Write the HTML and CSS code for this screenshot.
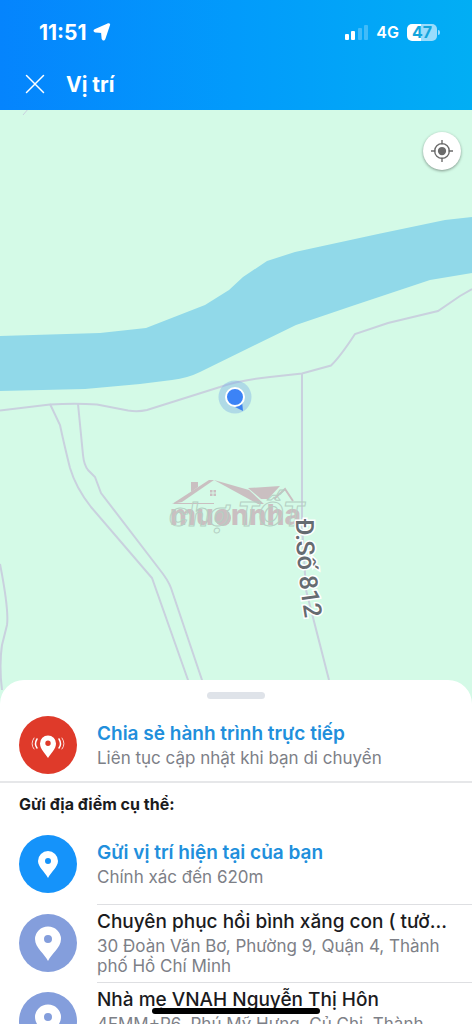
FILE: index.html
```html
<!DOCTYPE html>
<html lang="vi">
<head>
    <meta charset="UTF-8">
    <meta name="viewport" content="width=device-width, initial-scale=1.0">
    <title>Vị trí</title>
    <link rel="stylesheet" href="styles.css">
</head>
<body>
    <div class="app">
        <header class="header">
            <div class="status">
                <span class="time">11:51</span>
                <svg class="arrow" viewBox="0 0 18 18"><path d="M16 2 L11.500 15.500 Q10.600 17.500 9.600 15.500 L9 9 L2.500 8.500 Q0.500 7.800 2.500 6.800 L15 1.300 Q16.500 .8 16 2Z" fill="#fff" stroke="#fff" stroke-width="2" stroke-linejoin="round"/></svg>
                <svg class="signal" viewBox="0 0 24 16">
                    <rect x="0" y="10" width="4" height="6" rx="1" fill="#fff"/>
                    <rect x="6" y="7" width="4" height="9" rx="1" fill="#fff"/>
                    <rect x="13" y="4" width="4" height="12" rx="1" fill="#fff" opacity=".25"/>
                    <rect x="19" y="1" width="4" height="15" rx="1" fill="#fff" opacity=".25"/>
                </svg>
                <span class="network">4G</span>
                <span class="battery">47</span>
                <span class="battery-tip"></span>
            </div>
            <div class="title-bar">
                <button class="close" type="button" aria-label="Đóng">
                    <svg viewBox="0 0 20 20"><path d="M1.500 1.500 L18.500 18.500 M18.500 1.500 L1.500 18.500" stroke="#fff" stroke-width="1.500" stroke-linecap="round"/></svg>
                </button>
                <h1>Vị trí</h1>
            </div>
        </header>

        <main class="map">
            <svg class="map-canvas" viewBox="0 110 472 594" preserveAspectRatio="xMidYMin slice">
                <path class="river" d="M0 336 L100 333 L146 328 L205 305 L229 290 L243 277 L267 261 L295 252 L378 234 L445 220 L472 217 V273 L430 280 L352 306 L296 325 L200 372 Q188 378 172 380 L140 384 L85 389 L0 391Z"/>
                <g class="roads">
                    <path d="M0 410.500 L50 404.500 Q75 403 97 404.500 L128 410.500 Q138 412 147 410 L220 387 Q240 380 270 377 L302 373.500 L331 365.500 Q340 357 355 334 L388 323 L438 311 L460 296 L472 289"/>
                    <path d="M50 404 L60 425 Q64 444 70 468 Q76 488 91 507 L152 578 L188 680 L196 704"/>
                    <path d="M78 404 L83 455 Q84 465 88 470 L95 477 L101 493 L160 570 Q168 580 171 588 L202 680 L210 704"/>
                    <path d="M302 374 L302 525 L306 590 L329 680"/>
                    <path d="M0 564 Q9 610 7 625 L2 645 Q-1 665 2 690"/>
                    <path class="faint" d="M23 115 L29 108"/>
                </g>
                <g class="logo">
                    <path d="M172 504 L209 480 H214 L182 502Z"/>
                    <path d="M191 482 h7 v5 l-7 5Z"/>
                    <path d="M214 480 L249 490 L264 504 H258Z"/>
                    <path d="M248 488 L280 486 L268 499 H261Z"/>
                    <path d="M210 490h2.500v2.500h-2.500z M213.500 490h2.500v2.500h-2.500z M210 493.500h2.500v2.500h-2.500z M213.500 493.500h2.500v2.500h-2.500z"/>
                    <path class="logo-edge" d="M274 499 L285 489 L293 501"/>
                    <path class="logo-rule" d="M174 503.500 H214"/>
                    <circle cx="223" cy="518" r="8"/>
                    <text class="logo-name" x="170" y="525">muonnha</text>
                    <text class="logo-line" x="169" y="526">chợ TỐT</text>
                </g>
                <path id="street" d="M296 519 Q295 560 306 625" fill="none"/>
                <text class="street-name"><textPath href="#street">Đ.Số 812</textPath></text>
                <circle cx="235" cy="397" r="16.500" fill="#78aae6" opacity=".4"/>
                <path d="M235 407 L243 411 L242 401Z" fill="#3c83f0"/>
                <circle cx="235" cy="397" r="9" fill="#3c83f6" stroke="#fff" stroke-width="2"/>
            </svg>
            <button class="locate" type="button" aria-label="Vị trí của tôi">
                <svg viewBox="0 0 24 24"><circle cx="12" cy="12" r="8" fill="none" stroke="#6b6b6b" stroke-width="1.500"/><circle cx="12" cy="12" r="4.500" fill="#6b6b6b"/><path d="M12 0v5M12 19v5M0 12h5M19 12h5" stroke="#6b6b6b" stroke-width="1.500"/></svg>
            </button>
        </main>

        <section class="sheet">
            <div class="handle"></div>
            <a class="row live" href="#">
                <span class="icon red">
                    <svg viewBox="0 0 58 58" fill="none" stroke="#fff">
                        <path d="M29 42 C26 37 21 33 21 27.500 A8 8 0 0 1 37 27.500 C37 33 32 37 29 42Z M29 24.500 a2.700 2.700 0 1 0 0 5.400 a2.700 2.700 0 1 0 0 -5.400Z" fill="#fff" fill-rule="evenodd" stroke="none"/>
                        <path d="M18 23 Q15 28 18 32 M40 23 Q43 28 40 32" stroke-width="1.500" stroke-linecap="round"/>
                        <path d="M15 22 Q11 28 15 33 M43 22 Q47 28 43 33" stroke-width="1" stroke-linecap="round" opacity=".8"/>
                    </svg>
                </span>
                <span class="text">
                    <span class="name">Chia sẻ hành trình trực tiếp</span>
                    <span class="detail">Liên tục cập nhật khi bạn di chuyển</span>
                </span>
            </a>
            <h2>Gửi địa điểm cụ thể:</h2>
            <a class="row current" href="#">
                <span class="icon blue">
                    <svg viewBox="0 0 58 58"><path d="M29 43 C26 37 19 32 19 26 A10 10 0 0 1 39 26 C39 32 32 37 29 43Z M29 23 a3 3 0 1 0 0 6 a3 3 0 1 0 0 -6Z" fill="#fff" fill-rule="evenodd"/></svg>
                </span>
                <span class="text">
                    <span class="name">Gửi vị trí hiện tại của bạn</span>
                    <span class="detail">Chính xác đến 620m</span>
                </span>
            </a>
            <a class="row place" href="#">
                <span class="icon violet">
                    <svg viewBox="0 0 58 58"><path d="M29 47 C26 40 16 34 16 25 A13 12.500 0 0 1 42 25 C42 34 32 40 29 47Z M29 21 a4 4 0 1 0 0 8 a4 4 0 1 0 0 -8Z" fill="#fff" fill-rule="evenodd"/></svg>
                </span>
                <span class="text">
                    <span class="name">Chuyên phục hồi bình xăng con ( tưở...</span>
                    <span class="detail">30 Đoàn Văn Bơ, Phường 9, Quận 4, Thành phố Hồ Chí Minh</span>
                </span>
            </a>
            <a class="row place" href="#">
                <span class="icon violet">
                    <svg viewBox="0 0 58 58"><path d="M29 47 C26 40 16 34 16 25 A13 12.500 0 0 1 42 25 C42 34 32 40 29 47Z M29 21 a4 4 0 1 0 0 8 a4 4 0 1 0 0 -8Z" fill="#fff" fill-rule="evenodd"/></svg>
                </span>
                <span class="text">
                    <span class="name">Nhà mẹ VNAH Nguyễn Thị Hôn</span>
                    <span class="detail">4FMM+P6, Phú Mỹ Hưng, Củ Chi, Thành</span>
                </span>
            </a>
        </section>
        <div class="home-bar"></div>
    </div>
</body>
</html>
```
FILE: styles.css
```css
* {
    box-sizing: border-box;
}

body {
    margin: 0;
    font-family: Inter, "Liberation Sans", sans-serif;
    color: #1b1b1d;
    background-color: #fff;
}

.app {
    display: flex;
    flex-direction: column;
    height: 100vh;
    overflow: hidden;
    position: relative;
}

button {
    border: none;
    padding: 0;
    cursor: pointer;
}

a {
    color: inherit;
    text-decoration: none;
}

svg {
    display: block;
}

/* header */
.header {
    flex: none;
    color: white;
    background: linear-gradient(90deg, #0584fd, #029bfb 50%, #02aef4);
    padding: 20px 32px 12px 24px;
}

.status {
    display: flex;
    align-items: center;
    height: 24px;
    padding-left: 15px;
}

.time {
    font-size: 21px;
    font-weight: 700;
}

.arrow {
    width: 18px;
    height: 18px;
    margin: 0 auto 0 6px;
}

.signal {
    width: 24px;
    height: 16px;
}

.network {
    margin: 0 8px 0 7px;
    font-size: 16px;
    font-weight: 600;
}

.battery {
    width: 30px;
    border-radius: 5px;
    background: linear-gradient(90deg, #fff 47%, #9adcfc 47%);
    color: #12a5dc;
    font-size: 16px;
    line-height: 17px;
    font-weight: 700;
    text-align: center;
}

.battery-tip {
    width: 2px;
    height: 5px;
    margin-left: 1px;
    border-radius: 0 2px 2px 0;
    background-color: #9adcfc;
}

.title-bar {
    display: flex;
    align-items: center;
    gap: 20px;
    margin-top: 26px;
    height: 28px;
}

.close {
    background: none;
}

.close svg {
    width: 22px;
    height: 20px;
}

h1 {
    margin: 0;
    font-size: 21px;
    font-weight: 700;
}

/* map */
.map {
    flex: 0 0 58vh;
    position: relative;
    background-color: #d4fae7;
}

.map-canvas {
    width: 100%;
    height: 100%;
}

.river {
    fill: #91d9e9;
}

.roads {
    fill: none;
    stroke: #c9d1de;
    stroke-width: 2;
}

.faint {
    stroke-width: 1;
}

.logo {
    fill: #cabfc1;
}

.logo-edge {
    fill: none;
    stroke: #cabfc1;
    stroke-width: 2;
}

.logo-rule {
    stroke: #cabfc1;
}

.logo-name {
    font-size: 28px;
    font-weight: 800;
}

.logo-line {
    fill: none;
    stroke: #b5cfc3;
    font-size: 33px;
    font-style: italic;
    font-weight: 700;
}

.street-name {
    font-family: Roboto, sans-serif;
    font-size: 25px;
    font-weight: 500;
    fill: #666b70;
    stroke: #fff;
    stroke-width: 3;
    paint-order: stroke;
}

.locate {
    position: absolute;
    top: 22px;
    right: 11px;
    width: 38px;
    height: 38px;
    border-radius: 50%;
    background-color: white;
    box-shadow: 0 1px 3px rgba(0, 0, 0, 0.4);
}

.locate svg {
    width: 22px;
    height: 22px;
    margin: 0 auto;
}

/* bottom sheet */
.sheet {
    flex: 1;
    min-height: 0;
    overflow: hidden;
    position: relative;
    margin-top: -24px;
    padding-top: 12px;
    border-radius: 24px 24px 0 0;
    background-color: white;
}

.handle {
    width: 58px;
    height: 7px;
    margin: 0 auto;
    border-radius: 4px;
    background-color: #dfe3e9;
}

.row {
    display: flex;
    gap: 20px;
    padding-left: 19px;
}

.icon {
    flex: none;
    width: 58px;
    height: 58px;
    border-radius: 50%;
}

.red {
    background-color: #df3a2a;
}

.blue {
    background-color: #1593fa;
}

.violet {
    background-color: #849edc;
}

.text {
    flex: 1;
    min-width: 0;
}

.name,
.detail {
    display: block;
}

.name {
    margin-bottom: 2px;
    font-size: 19px;
    line-height: 24px;
    font-weight: 500;
    white-space: nowrap;
}

.detail {
    padding-right: 24px;
    font-size: 17px;
    line-height: 20px;
    color: #7d8087;
}

.live,
.current {
    align-items: center;
}

.live .name,
.current .name {
    color: #218fdc;
    font-weight: 600;
}

.live {
    padding-top: 17px;
    padding-bottom: 7px;
    border-bottom: 2px solid #e6e7e9;
}

h2 {
    margin: 0;
    padding: 11px 19px 0;
    font-size: 16px;
    line-height: 20px;
    font-weight: 700;
}

.current {
    padding-top: 21px;
    padding-bottom: 11px;
}

.place .text {
    padding: 5px 0 6px;
    border-top: 1px solid #dedfe2;
}

.place .icon {
    margin-top: 10px;
}

.home-bar {
    position: absolute;
    bottom: 10px;
    left: 50%;
    width: 168px;
    height: 6px;
    margin-left: -84px;
    border-radius: 3px;
    background-color: black;
}
```
